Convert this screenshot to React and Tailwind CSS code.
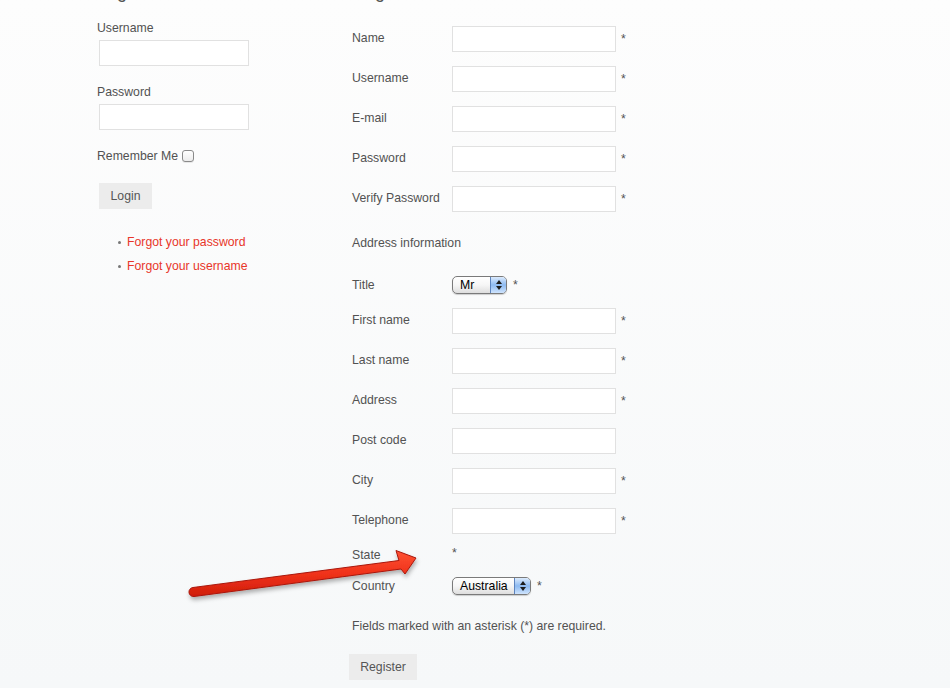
import React from "react";

const textField = "h-[26px] w-[164px] border border-[#e1e1e1] bg-white outline-none";
const body = "text-[12.25px] leading-[18px] text-[#525252]";

function Asterisk() {
  return <span className={`ml-[5px] ${body}`}>*</span>;
}

function FieldRow({ label, required = true, first = false }) {
  return (
    <div className={`flex h-[26px] items-center ${first ? "" : "mt-[14px]"}`}>
      <span className={`w-[100px] -mt-[2px] ${body}`}>{label}</span>
      <input type="text" className={textField} />
      {required && <Asterisk />}
    </div>
  );
}

function Stepper() {
  return (
    <span className="flex h-full w-[16px] flex-col items-center justify-center gap-[2px] border-l border-[#5d84be] bg-gradient-to-b from-[#dcebfd] via-[#8dbaf1] to-[#cfe4fd]">
      <svg width="6" height="4" viewBox="0 0 6 4">
        <path d="M3 0 L6 4 L0 4 Z" fill="#1d1d1d" />
      </svg>
      <svg width="6" height="4" viewBox="0 0 6 4">
        <path d="M0 0 L6 0 L3 4 Z" fill="#1d1d1d" />
      </svg>
    </span>
  );
}

function PopupButton({ value, width }) {
  return (
    <div
      className={`flex h-[18px] ${width} overflow-hidden rounded-[5px] border border-[#7a7a7a] bg-gradient-to-b from-white via-[#f6f6f6] to-[#dedede] shadow-[0_1px_1px_rgba(0,0,0,0.18)]`}
    >
      <span className="flex-1 pl-[7px] text-[12.25px] leading-[16px] text-black">{value}</span>
      <Stepper />
    </div>
  );
}

function SelectRow({ label, value, width, className = "" }) {
  return (
    <div className={`flex h-[18px] items-center ${className}`}>
      <span className={`w-[100px] -mt-[1px] ${body}`}>{label}</span>
      <PopupButton value={value} width={width} />
      <span className={`ml-[6px] ${body}`}>*</span>
    </div>
  );
}

function Bullet({ children }) {
  return (
    <li className="flex h-[18px] items-center">
      <span className="mr-[6px] h-[3px] w-[3px] rounded-full bg-[#777]" />
      <a href="#" className="text-[12.25px] leading-[18px] text-[#e8362a]">
        {children}
      </a>
    </li>
  );
}

function PointerArrow() {
  return (
    <svg className="pointer-events-none absolute left-0 top-0" width="950" height="688" viewBox="0 0 950 688">
      <defs>
        <linearGradient id="arrowFill" x1="0" y1="0" x2="0" y2="1">
          <stop offset="0" stopColor="#ff5234" />
          <stop offset="0.5" stopColor="#f0321a" />
          <stop offset="1" stopColor="#cf1d0b" />
        </linearGradient>
        <filter id="arrowShadow" x="-10%" y="-50%" width="120%" height="200%">
          <feDropShadow dx="1" dy="3" stdDeviation="2" floodColor="#000" floodOpacity="0.3" />
        </filter>
      </defs>
      <path
        d="M193 587.5 L399 560.5 L396 550.5 L416 558 L405 574 L401 569 L194 596.5 A4.5 4.5 0 0 1 193 587.5 Z"
        fill="url(#arrowFill)"
        stroke="#a9170a"
        strokeWidth="1"
        strokeLinejoin="round"
        filter="url(#arrowShadow)"
      />
    </svg>
  );
}

export default function App() {
  return (
    <div className="relative h-[688px] w-[950px] overflow-hidden bg-gradient-to-b from-[#fdfdfd] to-[#f6f8f9] font-['Liberation_Sans',Arial,sans-serif]">
      <div className="flex pl-[97px]">
        {/* Login column */}
        <div className="flex w-[255px] flex-col">
          <h2 className="-mt-[17px] h-[18px] text-[18px] leading-[18px] text-[#555]">Login</h2>
          <label className={`mt-[18px] ${body}`}>Username</label>
          <input type="text" className="mt-[3px] ml-[2px] h-[26px] w-[150px] border border-[#e1e1e1] bg-white outline-none" />
          <label className={`mt-[17px] ${body}`}>Password</label>
          <input type="password" className="mt-[3px] ml-[2px] h-[26px] w-[150px] border border-[#e1e1e1] bg-white outline-none" />
          <div className={`mt-[17px] flex h-[18px] items-center ${body}`}>
            <span>Remember Me</span>
            <span className="ml-[4px] h-[12px] w-[12px] rounded-[3px] border border-[#8a8a8a] bg-gradient-to-b from-white to-[#ececec] shadow-[0_1px_0_rgba(0,0,0,0.08)]" />
          </div>
          <button className="mt-[18px] ml-[2px] h-[26px] w-[53px] bg-[#ececec] text-[12.25px] text-[#555]">Login</button>
          <ul className="mt-[24px] ml-[21px] flex flex-col gap-[6px]">
            <Bullet>Forgot your password</Bullet>
            <Bullet>Forgot your username</Bullet>
          </ul>
        </div>

        {/* Registration column */}
        <div className="flex flex-col">
          <h2 className="-mt-[17px] h-[18px] text-[18px] leading-[18px] text-[#555]">Registration</h2>
          <div className="mt-[25px] flex flex-col">
            <FieldRow label="Name" first />
            <FieldRow label="Username" />
            <FieldRow label="E-mail" />
            <FieldRow label="Password" />
            <FieldRow label="Verify Password" />
          </div>
          <p className={`mt-[22px] ${body}`}>Address information</p>
          <SelectRow label="Title" value="Mr" width="w-[55px]" className="mt-[24px]" />
          <FieldRow label="First name" />
          <FieldRow label="Last name" />
          <FieldRow label="Address" />
          <FieldRow label="Post code" required={false} />
          <FieldRow label="City" />
          <FieldRow label="Telephone" />
          <div className={`mt-[12px] flex h-[18px] items-center ${body}`}>
            <span className="w-[100px]">State</span>
            <span className="-mt-[4px]">*</span>
          </div>
          <SelectRow label="Country" value="Australia" width="w-[79px]" className="mt-[13px]" />
          <p className={`mt-[22px] ${body}`}>Fields marked with an asterisk (*) are required.</p>
          <button className="mt-[19px] -ml-[3px] h-[26px] w-[68px] bg-[#ececec] text-[12.25px] text-[#555]">Register</button>
        </div>
      </div>
      <PointerArrow />
    </div>
  );
}
